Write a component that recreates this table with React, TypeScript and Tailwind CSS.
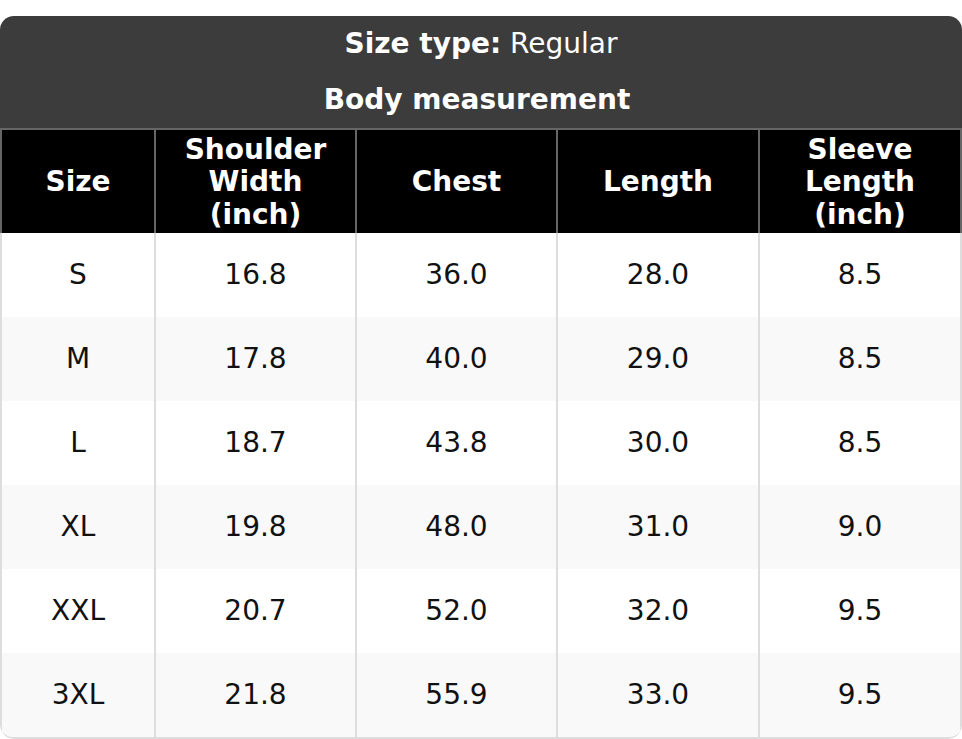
const rows: string[][] = [
  ['S', '16.8', '36.0', '28.0', '8.5'],
  ['M', '17.8', '40.0', '29.0', '8.5'],
  ['L', '18.7', '43.8', '30.0', '8.5'],
  ['XL', '19.8', '48.0', '31.0', '9.0'],
  ['XXL', '20.7', '52.0', '32.0', '9.5'],
  ['3XL', '21.8', '55.9', '33.0', '9.5'],
];

const widths = ['w-[154px]', 'w-[201px]', 'w-[201px]', 'w-[202px]', 'flex-1'];

// header labels wrap the same way as the picture
const headerLines: string[][] = [
  ['Size'],
  ['Shoulder', 'Width', '(inch)'],
  ['Chest'],
  ['Length'],
  ['Sleeve', 'Length', '(inch)'],
];

export default function App() {
  return (
    <div
      className="w-[962px] h-[739px] bg-white pt-4"
      style={{ fontFamily: '"DejaVu Sans", Verdana, sans-serif' }}
    >
      <div className="rounded-[14px] overflow-hidden">
        {/* 顶部标题 */}
        <div className="bg-[#3c3c3c] text-white text-[28px] leading-[1.164] text-center">
          <div className="h-[56px] flex items-center justify-center">
            <span className="font-bold">Size type:</span>
            <span>&nbsp;Regular</span>
          </div>
          <div className="h-[56px] pr-[8px] flex items-center justify-center font-bold">Body measurement</div>
        </div>

        {/* 表头 */}
        <div className="flex bg-black text-white text-[28px] leading-[1.164] font-bold border-t-2 border-[#666]">
          {headerLines.map((lines, i) => (
            <div
              key={i}
              className={`${widths[i]} h-[103px] pt-[2px] flex flex-col items-center justify-center text-center border-l-2 border-[#666] ${
                i === 4 ? 'border-r-2' : ''
              }`}
            >
              {lines.map((l) => (
                <span key={l}>{l}</span>
              ))}
            </div>
          ))}
        </div>

        {/* 数据行 */}
        <div className="border-b-2 border-[#dddddd] rounded-b-[14px] overflow-hidden">
          {rows.map((r, ri) => (
            <div
              key={r[0]}
              className={`flex text-[28px] leading-[1.164] text-[#111] ${ri % 2 === 1 ? 'bg-[#f9f9f9]' : 'bg-white'}`}
            >
              {r.map((v, i) => (
                <div
                  key={i}
                  className={`${widths[i]} h-[84px] flex items-center justify-center border-l-2 border-[#dddddd] ${
                    i === 4 ? 'border-r-2' : ''
                  }`}
                >
                  {v}
                </div>
              ))}
            </div>
          ))}
        </div>
      </div>
    </div>
  );
}
